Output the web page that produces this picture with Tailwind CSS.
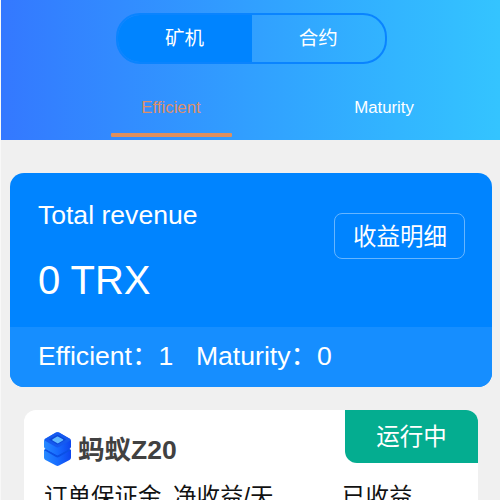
<!DOCTYPE html>
<html lang="zh">
<head>
<meta charset="utf-8">
<title>矿机</title>
<script src="https://cdn.jsdelivr.net/npm/@tailwindcss/browser@4"></script>
</head>
<body class="h-[500px] w-[500px] overflow-hidden bg-[#f0f0f0] font-['Liberation_Sans','Noto_Sans_CJK_SC',sans-serif] text-white">
<div class="h-[500px] overflow-hidden border-l border-[#f8f8f8]">
  <header class="flex h-[140px] flex-col bg-linear-to-r from-[#3478ff] to-[#34c4ff] pt-[13px]">
    <div class="ml-[114.5px] flex h-[51px] w-[271.5px] overflow-hidden rounded-[24px] border-2 border-[#0a84ff] text-[19.5px]">
      <div class="flex w-[134px] items-center justify-center bg-[#0084ff] pt-px">矿机</div>
      <div class="flex flex-1 items-center justify-center pt-px">合约</div>
    </div>
    <nav class="mt-auto flex pl-[63.5px] text-[16.8px] leading-[20px]">
      <div class="flex w-[213px] flex-col items-center text-[#df8f68]">
        <span>Efficient</span>
        <span class="mt-[15px] mb-[3px] h-[4px] w-[121px] rounded-[1px] bg-[#df8f5c]"></span>
      </div>
      <div class="w-[213px] text-center">Maturity</div>
    </nav>
  </header>

  <section class="mt-[33px] ml-[9.4px] h-[214px] w-[481.5px] overflow-hidden rounded-[14px] bg-[#0084ff]">
    <div class="flex h-[154px] justify-between pr-[26.5px] pl-[27.5px]">
      <div>
        <div class="mt-[27px] text-[26.6px] leading-[30px]">Total revenue</div>
        <div class="mt-[27px] text-[40px] leading-[46px]">0 TRX</div>
      </div>
      <div class="mt-[40px] flex h-[46px] w-[131px] items-center justify-center rounded-[8px] border border-[#66b5ff] pt-[3px] text-[23.5px]">收益明细</div>
    </div>
    <div class="flex h-[60px] items-center gap-[22.5px] bg-[#168eff] pl-[27.5px] text-[26.6px]">
      <span>Efficient：1</span><span>Maturity：0</span>
    </div>
  </section>

  <section class="mt-[23.4px] ml-[23px] h-[160px] w-[454px] rounded-[12px] bg-white text-[#111]">
    <div class="flex h-[53px] justify-between pl-[20px]">
      <div class="flex h-[78px] items-center gap-[7px]">
        <svg class="h-[34px] w-[27px]" viewBox="0 0 27 34">
          <defs>
            <linearGradient id="side" x1="0" x2="1"><stop offset="0" stop-color="#278aff"/><stop offset=".5" stop-color="#176cff"/><stop offset="1" stop-color="#0d45ee"/></linearGradient>
          </defs>
          <path d="M0 18 L4 16 H23 L27 18 V25.5 Q27 27 25.5 28 L15 33.5 Q13.5 34.3 12 33.5 L1.5 28 Q0 27 0 25.5Z" fill="url(#side)"/>
          <path d="M0 18 L2 17 L13.5 23.5 L25 17 L27 18 L15 25 Q13.5 25.8 12 25Z" fill="#0b50e5"/>
          <path d="M0 8.5 Q0 7.5 1.5 6.5 L12 .6 Q13.5 -.2 15 .6 L25.5 6.5 Q27 7.5 27 8.5 V14.5 Q27 16 25.5 17 L15 22.6 Q13.5 23.4 12 22.6 L1.5 17 Q0 16 0 14.5Z" fill="url(#side)"/>
          <path d="M1 7 L12 .6 Q13.5 -.2 15 .6 L26 7 Q26.6 8 25.5 9 L15 15 Q13.5 15.8 12 15 L1.5 9 Q.4 8 1 7Z" fill="#1559ef"/>
          <path d="M5 7.5 L13.5 2.7 L22 7.5 L13.5 12.7Z" fill="#0b48d8"/>
          <path d="M9 7.8 L13.5 5.2 L18.5 7.8 L13.8 10.7Z" fill="#61b9ff" stroke="#61b9ff" stroke-width="1.5" stroke-linejoin="round"/>
        </svg>
        <span class="pt-[3px] text-[26.5px] font-bold text-[#414141]">蚂蚁Z20</span>
      </div>
      <div class="flex h-[53px] w-[133px] items-center justify-center rounded-tr-[12px] rounded-bl-[12px] bg-[#04ad90] pt-[2px] text-[23.5px] text-white">运行中</div>
    </div>
    <div class="mt-[16.6px] flex pl-[20px] text-[23.5px] leading-[34px] whitespace-nowrap">
      <span class="w-[129px]">订单保证金</span><span class="w-[169px]">净收益/天</span><span>已收益</span>
    </div>
  </section>
</div>
</body>
</html>
